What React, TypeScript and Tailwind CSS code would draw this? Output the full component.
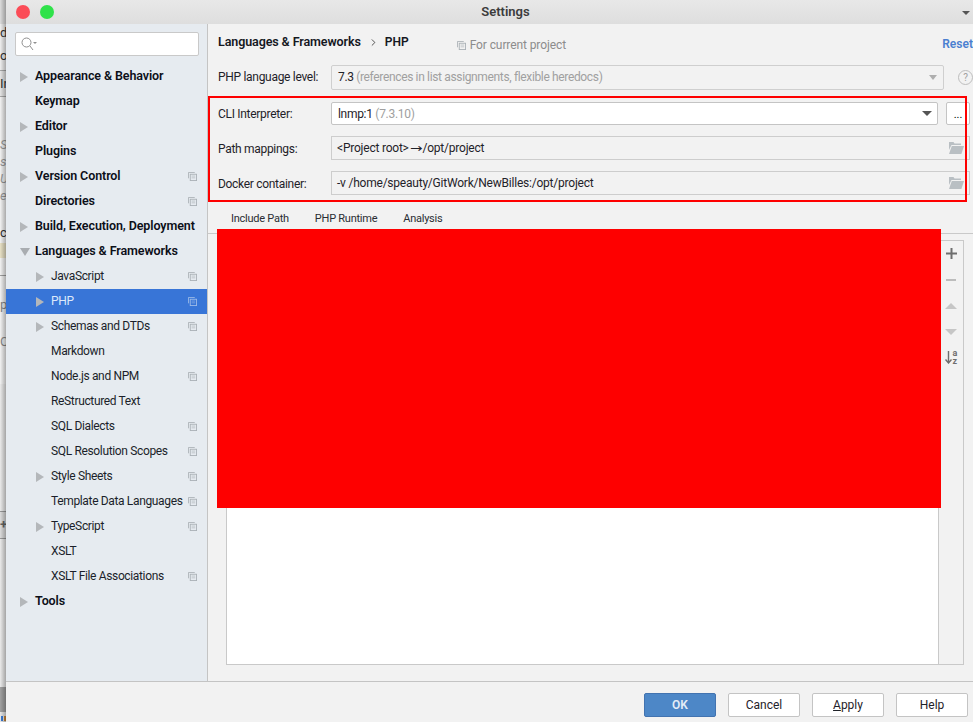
import React from 'react';
import { ChevronRight } from 'lucide-react';

const font = "font-['Roboto','Noto_Sans',sans-serif]";

type Item = { label: string; arrow?: 'right' | 'down'; copy?: boolean; bold?: boolean; active?: boolean };

const tree: Item[] = [
  { label: 'Appearance & Behavior', arrow: 'right', bold: true },
  { label: 'Keymap', bold: true },
  { label: 'Editor', arrow: 'right', bold: true },
  { label: 'Plugins', bold: true },
  { label: 'Version Control', arrow: 'right', bold: true, copy: true },
  { label: 'Directories', bold: true, copy: true },
  { label: 'Build, Execution, Deployment', arrow: 'right', bold: true },
  { label: 'Languages & Frameworks', arrow: 'down', bold: true },
  { label: 'JavaScript', arrow: 'right', copy: true },
  { label: 'PHP', arrow: 'right', copy: true, active: true },
  { label: 'Schemas and DTDs', arrow: 'right', copy: true },
  { label: 'Markdown' },
  { label: 'Node.js and NPM', copy: true },
  { label: 'ReStructured Text' },
  { label: 'SQL Dialects', copy: true },
  { label: 'SQL Resolution Scopes', copy: true },
  { label: 'Style Sheets', arrow: 'right', copy: true },
  { label: 'Template Data Languages', copy: true },
  { label: 'TypeScript', arrow: 'right', copy: true },
  { label: 'XSLT' },
  { label: 'XSLT File Associations', copy: true },
  { label: 'Tools', arrow: 'right', bold: true },
];

function CopyIcon({ className }: { className?: string }) {
  return (
    <svg width="9" height="9" viewBox="0 0 10 10" fill="none" stroke="currentColor" className={className}>
      <path d="M.5 7V.5H7.5" />
      <rect x="2.5" y="2.5" width="7" height="7" />
      <path d="M4 4.5h4M4 6.5h4" strokeWidth=".7" />
    </svg>
  );
}

function FolderIcon() {
  return (
    <svg width="16" height="12" viewBox="0 0 16 12" className="text-[#b9bfc3]" fill="currentColor">
      <path d="M1 0h4.5l1 1.5H13V3H3.5L1 8z" />
      <path d="M3.8 4H16l-2.6 8H1z" />
    </svg>
  );
}

function TreeRow({ item }: { item: Item }) {
  const indent = item.bold ? 'pl-[14px]' : 'pl-[30px]';
  return (
    <div className={`flex h-[25px] items-center ${indent} pr-[10px] ${item.active ? 'bg-[#3875d7] text-[#dce8fa]' : 'text-[#1b1f2a]'}`}>
      <span className="flex w-[15px] shrink-0 items-center">
        {item.arrow === 'right' && <span className="h-0 w-0 border-y-[5px] border-l-[8px] border-y-transparent border-l-[#b4b7ba]" />}
        {item.arrow === 'down' && <span className="h-0 w-0 border-x-[5px] border-t-[8px] border-x-transparent border-t-[#a9adb1]" />}
      </span>
      <span className={`flex-1 whitespace-nowrap ${item.bold ? 'text-[12.5px] font-semibold tracking-[-0.1px] text-[#0c0f18]' : 'mb-[2px] text-[12px] tracking-[-0.35px]'}`}>{item.label}</span>
      {item.copy && <CopyIcon className={item.active ? 'text-[#9dbbe8]' : 'text-[#aab1b6]'} />}
    </div>
  );
}

function Field({ label, children }: { label: string; children: React.ReactNode }) {
  return (
    <div className="flex h-[35px] items-center">
      <span className="w-[113px] shrink-0 tracking-[-0.3px] text-[#1f2229]">{label}</span>
      <div className="mb-[1px] flex h-[24px] flex-1 items-center justify-between border border-[#cdcdcd] pl-[5px] pr-[5px] text-[#1f2229]">
        <span className="tracking-[-0.22px]">{children}</span>
        <FolderIcon />
      </div>
    </div>
  );
}

// slice of the IDE window that shows behind the dialog
function BehindStrip() {
  return (
    <div className="relative flex h-full w-[6px] shrink-0 flex-col overflow-hidden text-[13px] leading-[17px] text-[#333]">
      <div className="h-[24px] shrink-0 bg-[#dcdcdc]" />
      <div className="h-[46px] shrink-0 bg-[#f0f0f0]">
        <div>d</div>
        <div className="pt-[6px]">o</div>
      </div>
      <div className="h-[27px] shrink-0 border-y border-[#a8a8a8] bg-[#e6e6e6] pt-[4px]">In</div>
      <div className="h-[146px] shrink-0 bg-[#f3f3f3] pt-[39px] italic text-[#9a9a9a]">
        <div>Sp</div>
        <div>sp</div>
        <div>Up</div>
        <div>ee</div>
        <div className="pt-[20px] not-italic text-[#333]">ct</div>
      </div>
      <div className="h-[15px] shrink-0 bg-[#e9e2c6]" />
      <div className="h-[18px] shrink-0 border-b border-[#a0a0a0] bg-[#f3f3f3]" />
      <div className="h-[108px] shrink-0 bg-[#f3f3f3] pt-[20px] text-[#8a8a8a]">
        <div>pa</div>
        <div className="pt-[20px]">Co</div>
      </div>
      <div className="h-[127px] shrink-0 bg-[#ebebeb]" />
      <div className="h-[28px] shrink-0 border-y border-[#9a9a9a] bg-[#dcdcdc] pt-[4px] font-bold text-[#666]">+</div>
      <div className="h-[148px] shrink-0 bg-[#ebebeb]" />
      <div className="h-[25px] shrink-0 bg-[#a2a2a2]" />
      <div className="flex flex-1 items-end gap-[1px] bg-[#e8e8e8] pb-[1px] pl-[1px]">
        <span className="h-[5px] w-[2px] bg-[#3a7bd5]" />
        <span className="h-[5px] w-[2px] bg-[#d08a3a]" />
      </div>
      <div className="absolute inset-0 bg-gradient-to-r from-transparent to-black/30" />
    </div>
  );
}

export default function App() {
  return (
    <div className={`relative flex h-[722px] w-[973px] overflow-hidden text-[12px] ${font}`}>
      <BehindStrip />

      <div className="flex h-full flex-1 flex-col bg-[#f2f2f2]">
        <div className="relative flex h-[24px] shrink-0 items-center justify-center bg-gradient-to-b from-[#e8e8e8] to-[#dedede]">
          <span className="pl-[32px] text-[13px] font-semibold text-[#3c3c3c]">Settings</span>
          <span className="absolute left-[10px] top-[5px] h-[14px] w-[14px] rounded-full bg-[#fb4c57]" />
          <span className="absolute left-[34px] top-[5px] h-[14px] w-[14px] rounded-full bg-[#2fe24a]" />
          <span className="absolute right-[3px] top-[11px] h-0 w-0 border-x-[4px] border-t-[4px] border-x-transparent border-t-[#555]" />
        </div>

        <div className="flex min-h-0 flex-1">
          <aside className="flex w-[202px] shrink-0 flex-col border-r border-[#c4c4c4] bg-[#e6ebf0]">
            <div className="ml-[9px] mr-[8px] mt-[8px] flex h-[24px] items-center rounded-[2px] border border-[#c9c9c9] bg-white pl-[5px]">
              <svg width="16" height="14" viewBox="0 0 16 14" fill="none" stroke="#8f8f8f">
                <circle cx="5.5" cy="5.5" r="4.5" />
                <path d="M9 9l3 4" />
                <path d="M12 5h4l-2 2z" fill="#8f8f8f" stroke="none" />
              </svg>
            </div>
            <div className="mt-[8px]">
              {tree.map((item) => (
                <TreeRow key={item.label} item={item} />
              ))}
            </div>
          </aside>

          <main className="relative flex min-w-0 flex-1 flex-col">
            <div className="flex h-[36px] shrink-0 items-center pl-[10px]">
              <span className="text-[12.5px] font-semibold tracking-[-0.1px] text-[#15181f]">Languages & Frameworks</span>
              <ChevronRight size={11} strokeWidth={1.8} className="ml-[7px] mr-[6px] text-[#333]" />
              <span className="text-[12px] font-semibold text-[#15181f]">PHP</span>
              <CopyIcon className="ml-[48px] mt-[6px] text-[#aab1b6]" />
              <span className="ml-[4px] mt-[6px] tracking-[-0.1px] text-[#8c8c8c]">For current project</span>
              <span className="ml-auto mt-[4px] text-[12px] font-semibold text-[#4a7fd0]">Reset</span>
            </div>

            <div className="flex h-[34px] shrink-0 items-center pl-[10px]">
              <span className="w-[113px] shrink-0 tracking-[-0.3px] text-[#1f2229]">PHP language level:</span>
              <div className="flex h-[25px] w-[613px] items-center justify-between rounded-[2px] border border-[#cfcfcf] pl-[6px] pr-[6px]">
                <span className="tracking-[-0.35px] text-[#1f2229]">
                  7.3 <span className="text-[#a0a0a0]">(references in list assignments, flexible heredocs)</span>
                </span>
                <span className="h-0 w-0 border-x-[4.5px] border-t-[5px] border-x-transparent border-t-[#aeaeae]" />
              </div>
              <span className="ml-[14px] flex h-[15px] w-[15px] items-center justify-center rounded-full border border-[#bdbdbd] text-[10px] text-[#a0a0a0]">?</span>
            </div>

            <div className="mt-[2px] shrink-0 pl-[10px] pr-[3px]">
              <div className="flex h-[35px] items-center">
                <span className="w-[113px] shrink-0 tracking-[-0.3px] text-[#1f2229]">CLI Interpreter:</span>
                <div className="flex h-[23px] flex-1 items-center justify-between rounded-[2px] border border-[#c4c4c4] bg-white pl-[6px] pr-[5px]">
                  <span className="tracking-[-0.3px] text-[#1f2229]">
                    lnmp:1 <span className="text-[#a0a0a0]">(7.3.10)</span>
                  </span>
                  <span className="h-0 w-0 border-x-[5px] border-t-[5px] border-x-transparent border-t-[#555]" />
                </div>
                <div className="ml-[8px] flex h-[23px] w-[24px] shrink-0 items-center justify-center rounded-[2px] border border-[#c4c4c4] bg-white pt-[3px] text-[11px]">...</div>
              </div>
              <Field label="Path mappings:">
                {'<Project root>'}
                <span className="inline-block scale-x-125 px-[2px] font-['DejaVu_Sans']">→</span>
                /opt/project
              </Field>
              <Field label="Docker container:">-v /home/speauty/GitWork/NewBilles:/opt/project</Field>
            </div>

            <div className="flex h-[33px] shrink-0 items-center gap-[26px] border-b border-[#c9c9c9] pl-[23px] pt-[4px] text-[11px] tracking-[-0.25px] text-[#2a2d33]">
              <span>Include Path</span>
              <span>PHP Runtime</span>
              <span>Analysis</span>
            </div>

            <div className="ml-[18px] mr-[9px] mt-[6px] flex min-h-0 flex-1 flex-col pb-[16px]">
              <div className="flex min-h-0 flex-1 border border-[#c9c9c9]">
                <div className="flex-1 bg-white" />
                <div className="flex w-[25px] shrink-0 flex-col items-center border-l border-[#c9c9c9] pt-[7px]">
                  <div className="flex h-[11px] items-center">
                    <svg width="11" height="11" viewBox="0 0 11 11" fill="#6e6e6e"><path d="M4.5 0h2v4.5H11v2H6.5V11h-2V6.5H0v-2h4.5z" /></svg>
                  </div>
                  <div className="mt-[15px] flex h-[11px] items-center">
                    <svg width="10" height="2" viewBox="0 0 10 2" fill="#bcbcbc"><path d="M0 0h10v2H0z" /></svg>
                  </div>
                  <div className="mt-[15px] flex h-[11px] items-center">
                    <span className="h-0 w-0 border-x-[6px] border-b-[6px] border-x-transparent border-b-[#c6c6c6]" />
                  </div>
                  <div className="mt-[15px] flex h-[11px] items-center">
                    <span className="h-0 w-0 border-x-[6px] border-t-[6px] border-x-transparent border-t-[#c6c6c6]" />
                  </div>
                  <div className="mt-[12px] flex h-[16px] items-center gap-[1px]">
                    <svg width="7" height="13" viewBox="0 0 7 13" fill="none" stroke="#6e6e6e" strokeWidth="1.4">
                      <path d="M3.5 0v12M.5 8.5l3 3.5 3-3.5" />
                    </svg>
                    <div className="flex flex-col text-[9px] font-bold leading-[8px] text-[#6e6e6e]">
                      <span>a</span>
                      <span>z</span>
                    </div>
                  </div>
                </div>
              </div>
            </div>

            {/* red block and red frame painted on the screenshot */}
            <div className="absolute left-[9px] top-[205px] h-[279px] w-[724px] bg-[#fe0000]" />
            <div className="absolute left-0 top-[72px] h-[106px] w-[759px] border-2 border-[#fe0000]" />
          </main>
        </div>

        <div className="flex h-[41px] shrink-0 items-start justify-end gap-[12px] border-t border-[#c4c4c4] pr-[5px] pt-[11px]">
          <button className="h-[24px] w-[72px] rounded-[2px] border border-[#4273b0] bg-[#4d87c7] font-semibold text-[#e4edf7]">OK</button>
          <button className="h-[24px] w-[72px] rounded-[2px] border border-[#c4c4c4] bg-white text-[#1f2229]">Cancel</button>
          <button className="h-[24px] w-[72px] rounded-[2px] border border-[#c4c4c4] bg-white text-[#1f2229]"><u>A</u>pply</button>
          <button className="h-[24px] w-[72px] rounded-[2px] border border-[#c4c4c4] bg-white text-[#1f2229]">Help</button>
        </div>
      </div>
    </div>
  );
}
